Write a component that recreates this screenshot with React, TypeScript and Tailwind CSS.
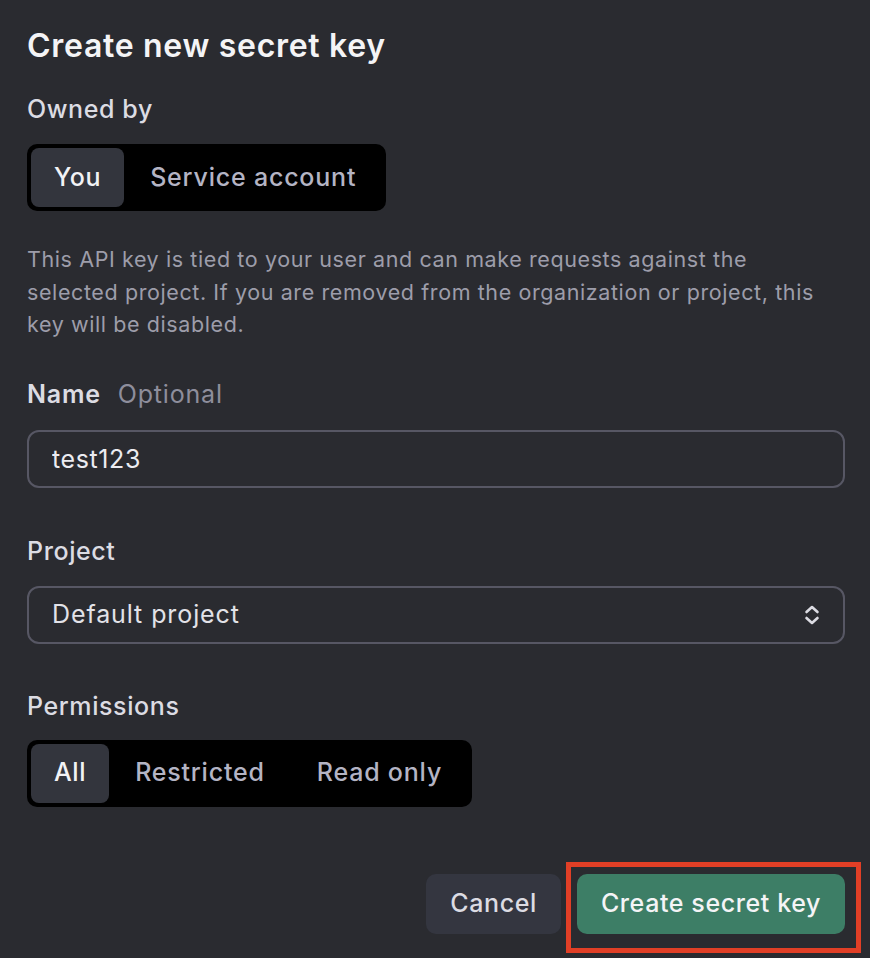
import React, { useState } from "react";

const font = { fontFamily: "Inter, 'Noto Sans', sans-serif" };

function Segmented({
  options,
  value,
  onChange,
}: {
  options: string[];
  value: string;
  onChange: (v: string) => void;
}) {
  return (
    <div className="inline-flex items-stretch h-[67px] p-[4px] rounded-[10px] bg-black">
      {options.map((opt) => (
        <button
          key={opt}
          onClick={() => onChange(opt)}
          className={
            opt === value
              ? "px-[23px] rounded-[8px] bg-[#33353d] text-[25px] tracking-[0.6px] font-medium text-[#f2f2f5]"
              : "px-[26px] rounded-[8px] text-[25px] tracking-[0.8px] font-medium text-[#b4b4c4]"
          }
        >
          {opt}
        </button>
      ))}
    </div>
  );
}

export default function App() {
  const [owner, setOwner] = useState("You");
  const [perm, setPerm] = useState("All");
  const [name, setName] = useState("test123");

  return (
    <div
      style={font}
      className="w-[870px] h-[958px] bg-[#2a2b30] pl-[27px] pr-[25px] pt-[26px] text-[#ececf1] overflow-hidden"
    >
      <h1 className="text-[32px] leading-[40px] tracking-[0.7px] font-semibold text-[#f4f4f6]">
        Create new secret key
      </h1>

      <div className="mt-[28px] text-[25px] leading-[30px] tracking-[0.6px] font-medium text-[#dcdce3]">
        Owned by
      </div>
      <div className="mt-[20px]">
        <Segmented
          options={["You", "Service account"]}
          value={owner}
          onChange={setOwner}
        />
      </div>

      <p className="mt-[32px] text-[21.5px] leading-[32.5px] tracking-[0.6px] text-[#9d9daa] max-w-[802px]">
        This API key is tied to your user and can make requests against the
        selected project. If you are removed from the organization or project,
        this key will be disabled.
      </p>

      <div className="mt-[38px] flex items-baseline gap-[17px] text-[25px] leading-[30px] tracking-[0.8px]">
        <span className="font-semibold text-[#dcdce3]">Name</span>
        <span className="text-[#8e8e9c]">Optional</span>
      </div>
      <input
        value={name}
        onChange={(e) => setName(e.target.value)}
        className="mt-[21px] w-full h-[58px] px-[23px] rounded-[12px] border-2 border-[#575764] bg-transparent text-[25px] tracking-[0.6px] text-[#ececf1] outline-none"
      />

      <div className="mt-[48px] text-[25px] leading-[30px] tracking-[0.6px] font-medium text-[#dcdce3]">
        Project
      </div>
      <div className="mt-[20px] w-full h-[58px] px-[23px] rounded-[12px] border-2 border-[#575764] flex items-center justify-between">
        <span className="text-[25px] tracking-[0.9px] text-[#e2e2e8]">
          Default project
        </span>
        <svg
          width="18"
          height="24"
          viewBox="0 0 18 24"
          fill="none"
          stroke="#dcdce3"
          strokeWidth="2.6"
          strokeLinecap="round"
          strokeLinejoin="round"
          className="mr-[-1px]"
        >
          <path d="M3.5 9 L9 4 L14.5 9" />
          <path d="M3.5 15 L9 20 L14.5 15" />
        </svg>
      </div>

      <div className="mt-[47px] text-[25px] leading-[30px] tracking-[0.6px] font-medium text-[#dcdce3]">
        Permissions
      </div>
      <div className="mt-[19px]">
        <Segmented
          options={["All", "Restricted", "Read only"]}
          value={perm}
          onChange={setPerm}
        />
      </div>

      <div className="mt-[67px] flex justify-end items-center gap-[16px]">
        <button className="h-[60px] px-[24px] rounded-[10px] bg-[#343640] text-[25px] tracking-[0.6px] font-medium text-[#dcdce3]">
          Cancel
        </button>
        <div className="relative">
          <div className="absolute -left-[11px] -top-[12px] -right-[16px] -bottom-[19px] border-[5px] border-[#e13f26] pointer-events-none" />
          <button className="h-[60px] px-[24px] rounded-[10px] bg-[#3d7e66] text-[25px] tracking-[0.6px] font-medium text-[#f4f4f6]">
            Create secret key
          </button>
        </div>
      </div>
    </div>
  );
}
